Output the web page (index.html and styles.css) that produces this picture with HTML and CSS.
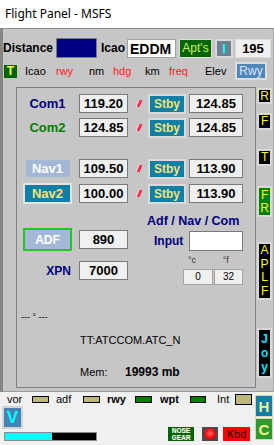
FILE: index.html
```html
<!DOCTYPE html>
<html lang="en">

<head>
    <meta charset="UTF-8">
    <meta name="viewport" content="width=device-width, initial-scale=1.0">
    <title>Flight Panel - MSFS</title>

    <link rel="stylesheet" href="styles.css">
</head>

<body>
    <div class="titlebar">Flight Panel - MSFS</div>

    <div class="window">
        <div class="top-row">
            <span class="lbl-big lbl-distance">Distance</span>
            <span class="distance-box"></span>
            <span class="lbl-big lbl-icao">Icao</span>
            <span class="icao-box">EDDM</span>
            <button class="btn btn-apts">Apt's</button>
            <button class="btn btn-i">I</button>
            <span class="elev-box">195</span>
        </div>

        <div class="label-row">
            <span class="t-box">T</span>
            <span>Icao</span>
            <span class="red">rwy</span>
            <span>nm</span>
            <span class="red">hdg</span>
            <span>km</span>
            <span class="red">freq</span>
            <span>Elev</span>
            <button class="btn btn-rwy">Rwy</button>
        </div>

        <div class="main">
            <div class="panel">
                <div class="radio-row">
                    <span class="radio-label com1">Com1</span>
                    <span class="freq">119.20</span>
                    <span class="flag"></span>
                    <button class="btn btn-stby">Stby</button>
                    <span class="freq freq-stby">124.85</span>
                </div>
                <div class="radio-row row-com2">
                    <span class="radio-label com2">Com2</span>
                    <span class="freq">124.85</span>
                    <span class="flag"></span>
                    <button class="btn btn-stby">Stby</button>
                    <span class="freq freq-stby">124.85</span>
                </div>
                <div class="radio-row row-nav1">
                    <span class="radio-label"><span class="nav1">Nav1</span></span>
                    <span class="freq">109.50</span>
                    <span class="flag"></span>
                    <button class="btn btn-stby">Stby</button>
                    <span class="freq freq-stby">113.90</span>
                </div>
                <div class="radio-row row-nav2">
                    <span class="radio-label"><button class="btn btn-nav2">Nav2</button></span>
                    <span class="freq">100.00</span>
                    <span class="flag"></span>
                    <button class="btn btn-stby">Stby</button>
                    <span class="freq freq-stby">113.90</span>
                </div>

                <div class="lower">
                    <div class="lower-left">
                        <div class="adf-row">
                            <button class="btn btn-adf">ADF</button>
                            <span class="freq">890</span>
                        </div>
                        <div class="xpn-row">
                            <span class="radio-label xpn">XPN</span>
                            <span class="freq">7000</span>
                        </div>
                    </div>
                    <div class="lower-right">
                        <div class="input-title">Adf / Nav / Com</div>
                        <div class="input-row">
                            <span class="input-label">Input</span>
                            <span class="input-box"></span>
                        </div>
                        <div class="temp-labels">
                            <span class="temp-c">°c</span>
                            <span class="temp-f">°f</span>
                        </div>
                        <div class="temp-boxes">
                            <span class="temp-box">0</span>
                            <span class="temp-box">32</span>
                        </div>
                    </div>
                </div>

                <div class="info-deg">--- ° ---</div>
                <div class="info-atc">TT:ATCCOM.ATC_N</div>
                <div class="info-mem"><span class="mem-label">Mem:</span><b>19993 mb</b></div>
            </div>

            <div class="side">
                <button class="btn side-btn side-r">R</button>
                <button class="btn side-btn side-f">F</button>
                <button class="btn side-btn side-t">T</button>
                <button class="btn side-btn side-fr">F<br>R</button>
                <button class="btn side-btn side-aplf">A<br>P<br>L<br>F</button>
                <button class="btn side-btn side-joy">J<br>o<br>y</button>
            </div>
        </div>
    </div>

    <div class="footer">
        <div class="footer-left">
            <div class="legend">
                <span>vor</span>
                <span class="swatch"></span>
                <span>adf</span>
                <span class="swatch"></span>
                <b>rwy</b>
                <span class="swatch swatch-green"></span>
                <b>wpt</b>
                <span class="swatch swatch-green swatch-narrow"></span>
                <span>Int</span>
                <span class="swatch swatch-tall"></span>
            </div>
            <div class="status">
                <div class="status-left">
                    <button class="btn btn-v">V</button>
                    <div class="bar"><div class="bar-fill" style="width: 52%"></div></div>
                </div>
                <div class="nose-gear">NOSE<br>GEAR</div>
                <div class="lamp"><span class="lamp-dot"></span></div>
                <div class="kbd">Kbd</div>
            </div>
        </div>
        <div class="footer-right">
            <button class="btn btn-h">H</button>
            <button class="btn btn-c">C</button>
        </div>
    </div>
</body>

</html>
```

FILE: styles.css
```css
* {
    box-sizing: border-box;
}

body {
    margin: 0;
    width: 274px;
    height: 445px;
    overflow: hidden;
    background-color: #f0f0f0;
    font-family: "Liberation Sans", Arial, sans-serif;
    font-size: 11px;
    color: #000;
}

.btn {
    margin: 0;
    padding: 0;
    font-family: inherit;
    font-size: inherit;
    line-height: 1;
    cursor: pointer;
    border: none;
}

.titlebar {
    height: 28px;
    line-height: 27px;
    padding-left: 5px;
    background-color: #fff;
    font-family: "Noto Sans", sans-serif;
    font-size: 12px;
}

.window {
    height: 364px;
    background-color: #c6c6c6;
    border-top: 1px solid #8c8c8c;
    border-left: 3px solid #858585;
    border-right: 1px solid #a8a8a8;
    border-bottom: 1px solid #9a9a9a;
}

/* top row */
.top-row {
    display: flex;
    align-items: center;
    height: 20px;
    margin-top: 9px;
}

.lbl-big {
    font-weight: bold;
    font-size: 12px;
}

.lbl-distance {
    width: 53px;
}

.distance-box {
    width: 41px;
    height: 20px;
    margin-right: 4px;
    background-color: #000080;
    border: 1px solid #7a7a7a;
}

.lbl-icao {
    width: 26px;
}

.icao-box {
    width: 49px;
    height: 19px;
    padding-left: 2px;
    line-height: 18px;
    background-color: #fff;
    border: 1px solid #a0a0a0;
    font-weight: bold;
    font-size: 14px;
}

.btn-apts {
    width: 33px;
    height: 19px;
    margin-left: 3px;
    background-color: #006400;
    border: 1px solid #e0e0e0;
    color: #d4f06a;
    font-size: 12px;
}

.btn-i {
    width: 18px;
    height: 19px;
    margin-left: 3px;
    background-color: #6f8190;
    border: 2px solid #dadada;
    color: #00ffff;
    font-weight: bold;
    font-size: 13px;
}

.elev-box {
    width: 36px;
    height: 19px;
    margin-left: 2px;
    line-height: 17px;
    text-align: center;
    background-color: #f0f0f0;
    border: 1px solid #dedede;
    font-weight: bold;
    font-size: 13px;
}

/* labels row */
.label-row {
    display: grid;
    grid-template-columns: 21px 31px 33px 24px 32px 24px 36px 30px 32px;
    align-items: center;
    height: 18px;
    margin-top: 4px;
    padding-left: 1px;
}

.red {
    color: #ff1a1a;
}

.t-box {
    width: 13px;
    height: 13px;
    line-height: 13px;
    text-align: center;
    background-color: #006400;
    color: #ffff40;
    font-weight: bold;
    font-size: 12px;
}

.btn-rwy {
    width: 32px;
    height: 18px;
    background-color: #4f86b8;
    border: 2px solid #dcdcdc;
    color: #dbe6ff;
    font-size: 12px;
}

/* main panel */
.main {
    display: flex;
    margin-top: 7px;
    padding-left: 13px;
}

.panel {
    width: 241px;
    height: 301px;
    padding-top: 6px;
    border: 1px solid #7f7f7f;
}

.radio-row {
    display: flex;
    align-items: center;
    height: 19px;
    padding-left: 6px;
}

.row-com2 {
    margin-top: 5px;
}

.row-nav1 {
    margin-top: 22px;
}

.row-nav2 {
    margin-top: 6px;
}

.radio-label {
    display: flex;
    justify-content: center;
    align-items: center;
    width: 49px;
    font-weight: bold;
    font-size: 13px;
}

.com1 {
    color: #000080;
}

.com2 {
    color: #008000;
}

.nav1 {
    width: 44px;
    height: 17px;
    line-height: 17px;
    text-align: center;
    background-color: #a2b8d6;
    color: #fff;
}

.btn-nav2 {
    width: 49px;
    height: 21px;
    background-color: #0f7fa6;
    border: 2px solid #e4e4e4;
    color: #f2e27a;
    font-weight: bold;
    font-size: 13px;
}

.freq {
    width: 49px;
    height: 19px;
    margin-left: 7px;
    line-height: 17px;
    text-align: center;
    background-color: #f0f0f0;
    border: 1px solid #7a7a7a;
    font-weight: bold;
    font-size: 13px;
}

.flag {
    width: 4px;
    height: 7px;
    margin-left: 9px;
    background-color: #ff2a4a;
    border-left: 1px solid #fff;
    transform: skewX(-22deg);
}

.btn-stby {
    width: 38px;
    height: 20px;
    margin-left: 7px;
    background-color: #0f7fa6;
    border: 2px solid #dadada;
    color: #f2e27a;
    font-weight: bold;
    font-size: 12px;
}

.freq-stby {
    width: 54px;
    margin-left: 3px;
}

/* adf, xpn and input */
.lower {
    display: flex;
    height: 71px;
    margin-top: 11px;
}

.lower-left {
    width: 111px;
    padding-top: 14px;
    padding-left: 6px;
}

.adf-row,
.xpn-row {
    display: flex;
    align-items: center;
}

.adf-row {
    height: 23px;
}

.xpn-row {
    height: 19px;
    margin-top: 10px;
}

.btn-adf {
    width: 49px;
    height: 23px;
    background-color: #a2b8d6;
    border: 2px solid #1ec81e;
    color: #fff;
    font-weight: bold;
    font-size: 12px;
}

.xpn {
    justify-content: flex-end;
    padding-right: 1px;
    color: #000080;
    font-size: 12px;
}

.lower-right {
    margin-left: 19px;
    color: #000080;
}

.input-title {
    line-height: 14px;
    font-weight: bold;
    font-size: 12.5px;
}

.input-row {
    display: flex;
    align-items: center;
    height: 20px;
    margin-top: 3px;
}

.input-label {
    width: 35px;
    margin-left: 7px;
    font-weight: bold;
    font-size: 12px;
}

.input-box {
    width: 54px;
    height: 20px;
    background-color: #fff;
    border: 1px solid #7a7a7a;
}

.temp-labels {
    height: 10px;
    margin-top: 4px;
    line-height: 10px;
    font-size: 9px;
    color: #333;
}

.temp-c {
    margin-left: 41px;
}

.temp-f {
    margin-left: 24px;
}

.temp-boxes {
    display: flex;
    gap: 1px;
    margin-top: 4px;
    margin-left: 36px;
}

.temp-box {
    width: 30px;
    height: 16px;
    line-height: 14px;
    text-align: center;
    background-color: #f0f0f0;
    border: 1px solid #a4a4a4;
    color: #000;
    font-size: 10px;
}

.temp-box + .temp-box {
    width: 29px;
}

.info-deg {
    margin-top: 26px;
    padding-left: 4px;
    line-height: 12px;
    font-size: 9px;
}

.info-atc {
    margin-top: 10px;
    padding-left: 63px;
    line-height: 14px;
    white-space: nowrap;
}

.info-mem {
    margin-top: 18px;
    padding-left: 63px;
    line-height: 14px;
}

.mem-label {
    display: inline-block;
    width: 45px;
}

.info-mem b {
    font-size: 12px;
}

/* side buttons */
.side {
    display: flex;
    flex-direction: column;
    width: 16px;
    margin-left: 1px;
    padding-top: 1px;
}

.side-btn {
    width: 15px;
    background-color: #000;
    border: 2px solid #d8d8d8;
    color: #ffff00;
    font-size: 12px;
    line-height: 13px;
}

.side-r {
    height: 16px;
}

.side-f {
    height: 17px;
    margin-top: 9px;
}

.side-t {
    height: 17px;
    margin-top: 19px;
}

.side-fr {
    height: 31px;
    margin-top: 20px;
    background-color: #008000;
}

.side-aplf {
    height: 58px;
    margin-top: 25px;
    line-height: 13.5px;
}

.side-joy {
    height: 50px;
    margin-top: 28px;
    color: #00e8ff;
    font-weight: bold;
    line-height: 14px;
}

/* footer */
.footer {
    display: flex;
    height: 53px;
}

.footer-left {
    width: 255px;
}

.legend {
    display: grid;
    grid-template-columns: 25px 24px 27px 24px 28px 25px 30px 27px 18px 17px;
    align-items: center;
    height: 12px;
    margin-top: 1px;
    padding-left: 7px;
    font-size: 11px;
}

.legend b {
    font-size: 11px;
}

.swatch {
    width: 17px;
    height: 7px;
    background-color: #bdb77a;
    border: 1px solid #000;
}

.swatch-green {
    background-color: #008000;
}

.swatch-narrow {
    width: 16px;
}

.swatch-tall {
    height: 11px;
}

.status {
    display: flex;
    align-items: flex-end;
    margin-top: 1px;
}

.status-left {
    width: 97px;
}

.btn-v {
    display: block;
    width: 21px;
    height: 23px;
    margin-left: 2px;
    background-color: #4682b4;
    border: 2px solid #d4d4d4;
    color: #00ffff;
    font-weight: bold;
    font-size: 17px;
}

.bar {
    width: 93px;
    height: 9px;
    margin-top: 3px;
    margin-left: 4px;
    background-color: #000;
    border: 1px solid #8a8a8a;
}

.bar-fill {
    height: 100%;
    background-color: #00ffff;
}

.nose-gear {
    width: 26px;
    height: 14px;
    margin-left: 71px;
    padding-top: 1px;
    background-color: #006400;
    color: #fff;
    font-weight: bold;
    font-size: 6.5px;
    line-height: 6.5px;
    text-align: center;
    text-shadow: 1px 0 0 #4a8a4a;
}

.lamp {
    display: flex;
    justify-content: center;
    align-items: center;
    width: 16px;
    height: 14px;
    margin-left: 8px;
    background-color: #4a4a4a;
}

.lamp-dot {
    width: 12px;
    height: 12px;
    border-radius: 50%;
    background: radial-gradient(circle at 50% 45%, #ff7070 0, #ff1010 45%, #a00000 100%);
}

.kbd {
    width: 27px;
    height: 14px;
    margin-left: 5px;
    line-height: 14px;
    text-align: center;
    background-color: #ff0000;
    color: #200000;
    font-size: 11px;
}

.footer-right {
    display: flex;
    flex-direction: column;
    gap: 1px;
    padding-top: 3px;
}

.btn-h,
.btn-c {
    width: 18px;
    height: 22px;
    border: 1px solid #d6d6b0;
    color: #f4f08c;
    font-weight: bold;
    font-size: 15px;
}

.btn-h {
    background-color: #137ea6;
}

.btn-c {
    background-color: #2e9a2e;
}
```
